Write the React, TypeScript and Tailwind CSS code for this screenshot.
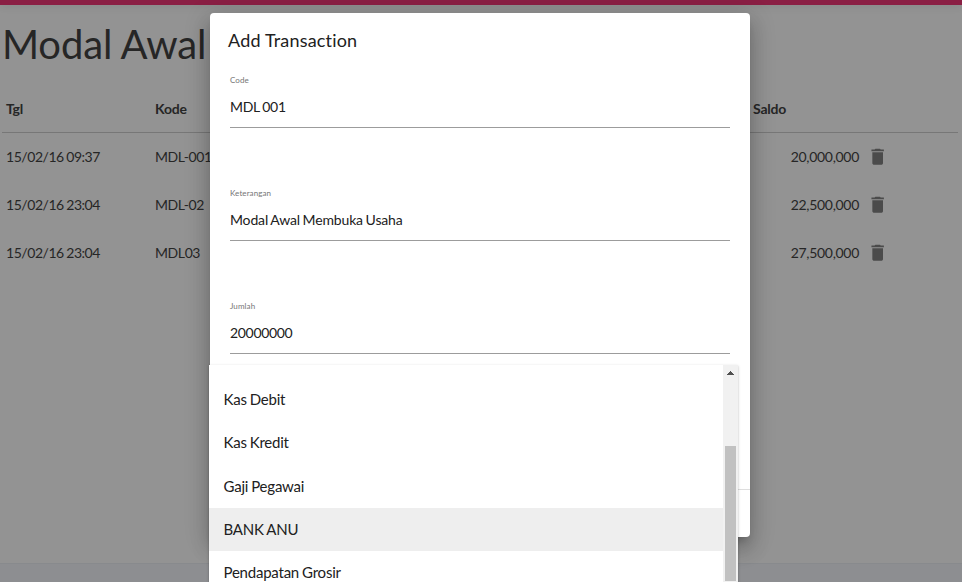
import React from "react";

const rows = [
  { tgl: "15/02/16 09:37", kode: "MDL-001", saldo: "20,000,000" },
  { tgl: "15/02/16 23:04", kode: "MDL-02", saldo: "22,500,000" },
  { tgl: "15/02/16 23:04", kode: "MDL03", saldo: "27,500,000" },
];

const fields = [
  { label: "Code", value: "MDL 001", spacing: "tracking-[-0.27px]" },
  { label: "Keterangan", value: "Modal Awal Membuka Usaha", spacing: "tracking-[-0.16px]" },
  { label: "Jumlah", value: "20000000", spacing: "tracking-[-0.32px]" },
];

const options = ["Kas Debit", "Kas Kredit", "Gaji Pegawai", "BANK ANU", "Pendapatan Grosir"];

function TrashIcon() {
  return (
    <svg className="ml-2 block h-[21.330px] w-[21.330px] fill-[#4b4b4b]" viewBox="0 0 24 24">
      <path d="M6 19c0 1.100.9 2 2 2h8c1.100 0 2-.9 2-2V7H6v12z" />
      <path d="M19 4h-3.500l-1-1h-5l-1 1H5v2h14V4z" />
    </svg>
  );
}

function Field({ label, value, spacing }: { label: string; value: string; spacing: string }) {
  return (
    <div className="mb-[59px] h-[54px] border-b border-[#9c9c9c]">
      <div className="h-3 text-[8px] leading-3 tracking-[0.1px] text-[#757575]">{label}</div>
      <div className={"mt-2 text-[14px] leading-[26px] text-[#212121] [word-spacing:-0.7px] " + spacing}>{value}</div>
    </div>
  );
}

export default function App() {
  return (
    <div className="relative h-[582px] w-full overflow-hidden bg-[#939393] font-['Lato',sans-serif] text-[#262626] [font-variant-ligatures:none]">
      <div className="flex h-full flex-col">
        <div className="h-[5px] shrink-0 bg-[#8a1f44] shadow-[0_1px_8px_rgba(0,0,0,0.1)]" />
        <h1 className="h-[80px] shrink-0 pl-[2px] text-[40px] leading-[78px] tracking-[-0.15px] whitespace-nowrap [word-spacing:-0.5px]">
          Modal Awal
        </h1>
        <div className="ml-[2px] flex h-[48px] w-[956px] shrink-0 items-center border-b border-[#777] pl-1 text-[14px] font-bold tracking-[-0.2px]">
          <div className="w-[149px]">Tgl</div>
          <div className="w-[598px]">Kode</div>
          <div>Saldo</div>
        </div>
        {rows.map((r) => (
          <div key={r.kode} className="flex h-12 shrink-0 items-center pl-[6px] text-[14px]">
            <div className="w-[149px] pb-[2px] tracking-[-0.45px] [word-spacing:-0.7px]">{r.tgl}</div>
            <div className="w-[598px] pb-[2px] tracking-[-0.4px]">{r.kode}</div>
            <div className="w-[106px] pb-[2px] text-right tracking-[-0.3px]">{r.saldo}</div>
            <TrashIcon />
          </div>
        ))}
        <div className="mt-auto h-[19px] shrink-0 border-t border-[#888a8d] bg-[#8d8e91]" />
      </div>

      <div className="absolute top-[13px] left-[210px] flex h-[524px] w-[540px] flex-col rounded-[4px] bg-white shadow-[0_7px_8px_-4px_rgba(0,0,0,0.2),0_13px_19px_2px_rgba(0,0,0,0.14),0_5px_24px_4px_rgba(0,0,0,0.12)]">
        <div className="pt-[15px] pl-[18px] text-[18px] leading-6 tracking-[0.18px] text-[#212121]">Add Transaction</div>
        <div className="px-5 pt-[22px]">
          {fields.map((f) => (
            <Field key={f.label} label={f.label} value={f.value} spacing={f.spacing} />
          ))}
        </div>
        <div className="mt-auto h-[48px] shrink-0 border-t border-[#dedede]" />
      </div>

      <div className="absolute top-[365px] left-[209px] flex h-[217px] w-[529px] bg-white shadow-[0_1px_3px_0_rgba(0,0,0,0.2),0_1px_1px_0_rgba(0,0,0,0.14),0_2px_1px_-1px_rgba(0,0,0,0.12)]">
        <div className="flex-1 pt-[13px] text-[15px] leading-[43px] tracking-[-0.22px] text-[#212121] [word-spacing:-0.6px]">
          {options.map((o) => (
            <div key={o} className={o === "BANK ANU" ? "h-[43.3px] bg-[#eeeeee] pl-[14.5px]" : "h-[43.3px] pl-[14.5px]"}>
              {o}
            </div>
          ))}
        </div>
        <div className="flex w-[15px] flex-col items-center bg-[#f1f1f1]">
          <svg className="mt-[6px] h-[4px] w-[7px]" viewBox="0 0 7 4" shapeRendering="crispEdges">
            <path d="M3 0h1v1h1v1h1v1h1v1H0V3h1V2h1V1h1z" fill="#505050" />
          </svg>
          <div className="mt-[71px] h-[135px] w-[11px] bg-[#c1c1c1]" />
        </div>
      </div>
    </div>
  );
}
